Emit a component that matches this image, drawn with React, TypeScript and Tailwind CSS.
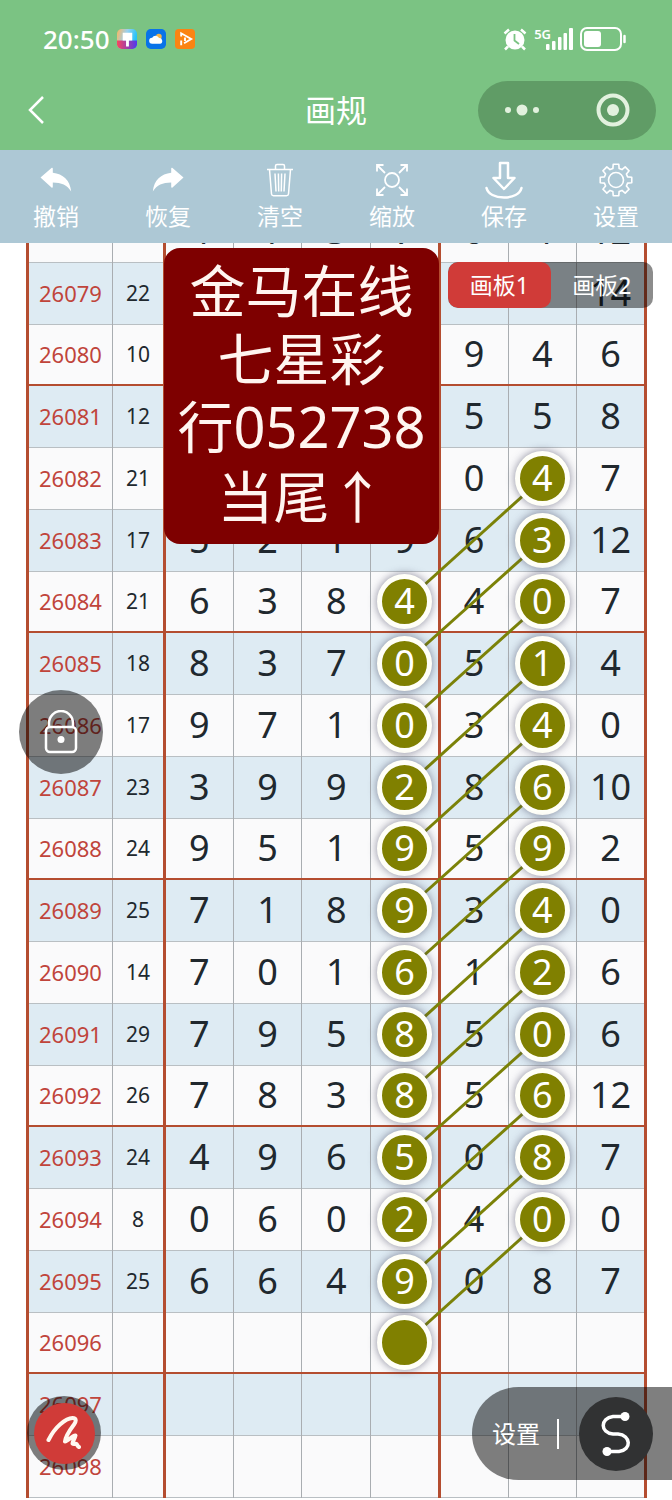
const rows = [
  { issue: "26078", sum: "", digits: ["4", "4", "3", "7", "0", "4", "12"] },
  { issue: "26079", sum: "22", digits: ["", "", "", "", "", "", "14"] },
  { issue: "26080", sum: "10", digits: ["", "", "", "", "9", "4", "6"] },
  { issue: "26081", sum: "12", digits: ["", "", "", "", "5", "5", "8"] },
  { issue: "26082", sum: "21", digits: ["", "", "", "", "0", "4", "7"] },
  { issue: "26083", sum: "17", digits: ["5", "2", "1", "9", "6", "3", "12"] },
  { issue: "26084", sum: "21", digits: ["6", "3", "8", "4", "4", "0", "7"] },
  { issue: "26085", sum: "18", digits: ["8", "3", "7", "0", "5", "1", "4"] },
  { issue: "26086", sum: "17", digits: ["9", "7", "1", "0", "3", "4", "0"] },
  { issue: "26087", sum: "23", digits: ["3", "9", "9", "2", "8", "6", "10"] },
  { issue: "26088", sum: "24", digits: ["9", "5", "1", "9", "5", "9", "2"] },
  { issue: "26089", sum: "25", digits: ["7", "1", "8", "9", "3", "4", "0"] },
  { issue: "26090", sum: "14", digits: ["7", "0", "1", "6", "1", "2", "6"] },
  { issue: "26091", sum: "29", digits: ["7", "9", "5", "8", "5", "0", "6"] },
  { issue: "26092", sum: "26", digits: ["7", "8", "3", "8", "5", "6", "12"] },
  { issue: "26093", sum: "24", digits: ["4", "9", "6", "5", "0", "8", "7"] },
  { issue: "26094", sum: "8", digits: ["0", "6", "0", "2", "4", "0", "0"] },
  { issue: "26095", sum: "25", digits: ["6", "6", "4", "9", "0", "8", "7"] },
  { issue: "26096", sum: "", digits: ["", "", "", "", "", "", ""] },
  { issue: "26097", sum: "", digits: ["", "", "", "", "", "", ""] },
  { issue: "26098", sum: "", digits: ["", "", "", "", "", "", ""] },
];

// every fourth issue closes a block with a red rule
const endsBlock = (issue: string) => Number(issue) % 4 === 0;

const rowCenter = (index: number) =>
  rows.slice(0, index).reduce((y, row) => y + (endsBlock(row.issue) ? 61 : 62), 0) + 31;

// each link goes from the sixth digit down to the fourth digit two rows later
const links = Array.from({ length: 13 }, (_, i) => ({ from: i + 4, to: i + 6 }));

const isMarked = (row: number, col: number) =>
  links.some((l) => (col === 5 && l.from === row) || (col === 3 && l.to === row));

const gearPoints = Array.from({ length: 8 }, (_, i) =>
  [
    [-15, 12],
    [-10, 16],
    [10, 16],
    [15, 12],
  ].map(([deg, r]) => {
    const a = ((i * 45 + deg) * Math.PI) / 180;
    return `${(17 + r * Math.sin(a)).toFixed(2)},${(17 - r * Math.cos(a)).toFixed(2)}`;
  })
)
  .flat()
  .join(" ");

function ArrowIcon({ flip = false }: { flip?: boolean }) {
  return (
    <svg viewBox="0 0 32 26" className={flip ? "h-[26px] w-8 -scale-x-100" : "h-[26px] w-8"} fill="currentColor">
      <path d="M.5 10.5 11.5 1c.7-.5 1.3-.2 1.3.6v4.2C23 7 30 13 31.2 24.5 27 18 21.5 15.7 12.8 15.6v4.2c0 .9-.7 1.2-1.3.6z" />
    </svg>
  );
}

function TrashIcon() {
  return (
    <svg viewBox="0 0 28 34" className="h-[34px] w-7" fill="none" stroke="currentColor" strokeWidth="1.5">
      <path d="M1 6.5h26M9.500 6.500V3q0-1.500 1.500-1.500h6q1.500 0 1.500 1.500v3.500M3.500 6.500l2 24.500q.2 1.800 2 1.800h13q1.800 0 2-1.800l2-24.500M9 10.500l1 18M12.400 10.500l.3 18M15.600 10.500l-.3 18M19 10.500l-1 18" />
    </svg>
  );
}

function ZoomIcon() {
  return (
    <svg viewBox="0 0 34 34" className="size-[34px]" fill="none" stroke="currentColor" strokeWidth="1.8">
      <circle cx="17" cy="17" r="7" />
      <path d="M8.500 2H2v6.500M2 2l8 8M25.500 2H32v6.500M32 2l-8 8M2 25.500V32h6.500M2 32l8-8M32 25.500V32h-6.500M32 32l-8-8" />
    </svg>
  );
}

function SaveIcon() {
  return (
    <svg
      viewBox="0 0 38 38"
      className="size-[38px]"
      fill="none"
      stroke="currentColor"
      strokeWidth="2.5"
      strokeLinejoin="round"
      strokeLinecap="round"
    >
      <path d="M15 2h8v15h6.500L19 28 8.500 17H15z" />
      <path d="M1.500 27C3 33 10 36.500 19 36.500S35 33 36.500 27" />
    </svg>
  );
}

function GearIcon() {
  return (
    <svg viewBox="0 0 34 34" className="size-[34px]" fill="none" stroke="currentColor" strokeWidth="1.6" strokeLinejoin="round">
      <polygon points={gearPoints} />
      <circle cx="17" cy="17" r="7.5" />
    </svg>
  );
}

const tools = [
  { label: "撤销", icon: <ArrowIcon /> },
  { label: "恢复", icon: <ArrowIcon flip /> },
  { label: "清空", icon: <TrashIcon /> },
  { label: "缩放", icon: <ZoomIcon /> },
  { label: "保存", icon: <SaveIcon /> },
  { label: "设置", icon: <GearIcon /> },
];

function StatusBar() {
  return (
    <div className="flex h-[70px] items-center justify-between pt-2 pr-[46px] pl-[43px]">
      <div className="flex items-center gap-[7px]">
        <span className="text-[26px] leading-none font-medium">20:50</span>
        <div className="flex items-center gap-[9px]">
          <svg viewBox="0 0 21 21" className="size-5">
            <defs>
              <linearGradient id="theme" x1="0" y1="0" x2="1" y2="0.3">
                <stop offset="0" stopColor="#ffb65c" />
                <stop offset="0.5" stopColor="#9bd0ee" />
                <stop offset="1" stopColor="#22c3fa" />
              </linearGradient>
              <linearGradient id="themeLow" x1="0" y1="0" x2="1" y2="0">
                <stop offset="0" stopColor="#f8475f" />
                <stop offset="1" stopColor="#5038ee" />
              </linearGradient>
            </defs>
            <rect width="21" height="21" rx="5" fill="url(#theme)" />
            <path d="M0 12h21v4a5 5 0 0 1-5 5H5a5 5 0 0 1-5-5z" fill="url(#themeLow)" />
            <path d="M6 4h10v8h-3.500v6.500h-3V12H6z" fill="#fff" />
          </svg>
          <svg viewBox="0 0 21 21" className="size-5">
            <rect width="21" height="21" rx="5" fill="#0873e8" />
            <circle cx="13.5" cy="8" r="3" fill="#f6b64b" />
            <path d="M6.500 15.500a3.200 3.200 0 0 1 0-6.400 4 4 0 0 1 7.200.3 3.100 3.100 0 0 1 1 6.100z" fill="#fff" />
          </svg>
          <svg viewBox="0 0 21 21" className="size-5">
            <rect width="21" height="21" rx="4" fill="#fb8412" />
            <path d="M6.500 8V4.500l10.500 6-7.500 4.500M6.500 12v5M10.500 9v3.500" fill="none" stroke="#fff" strokeWidth="2" />
          </svg>
        </div>
      </div>
      <div className="flex items-center gap-[7px]">
        <svg viewBox="0 0 24 24" className="size-6">
          <circle cx="12" cy="13" r="9.5" fill="#fff" />
          <path d="M1.500 6.500 6 2.500M22.500 6.500 18 2.500M5 19.500l-3 3M19 19.500l3 3" stroke="#fff" strokeWidth="2.5" />
          <path d="M11.500 7v6.500l4.500 3.500" fill="none" stroke="#7bc383" strokeWidth="1.8" />
        </svg>
        <div className="flex items-end">
          <span className="-mr-[10px] self-start text-[13px] leading-3 font-semibold">5G</span>
          <svg viewBox="0 0 32 22" className="h-[22px] w-8" fill="#fff">
            <rect x="5" y="16" width="3.5" height="6" rx="1" />
            <rect x="11" y="13" width="3.5" height="9" rx="1" />
            <rect x="17" y="9" width="3.5" height="13" rx="1" />
            <rect x="22.500" y="5" width="3.500" height="17" rx="1" />
            <rect x="28" y="0" width="4" height="22" rx="1" />
          </svg>
        </div>
        <svg viewBox="0 0 46 24" className="h-6 w-[46px]" fill="none">
          <rect x="1" y="1" width="40" height="22" rx="6" stroke="#fff" strokeWidth="2" />
          <rect x="4" y="4" width="17" height="16" rx="3" fill="#fff" />
          <path d="M44.500 9v6" stroke="#fff" strokeWidth="2.5" strokeLinecap="round" />
        </svg>
      </div>
    </div>
  );
}

export default function App() {
  return (
    <div className="flex h-screen flex-col overflow-hidden bg-white font-['Noto_Sans','Noto_Sans_CJK_SC',sans-serif]">
      <header className="bg-[#7bc383] text-white">
        <StatusBar />
        <nav className="grid h-20 grid-cols-3 items-center px-4">
          <button aria-label="返回" className="ml-2 flex size-6 items-center justify-center">
            <svg viewBox="0 0 16 28" className="h-7 w-4" fill="none" stroke="currentColor" strokeWidth="2.5">
              <path d="M15 1 2 14l13 13" />
            </svg>
          </button>
          <h1 className="text-center text-[31px] leading-none">画规</h1>
          <div className="flex h-[59px] w-[178px] items-center justify-between justify-self-end rounded-full bg-[#609c66] px-[26px]">
            <button aria-label="更多">
              <svg viewBox="0 0 36 12" className="h-3 w-9" fill="#e2f1de">
                <circle cx="4" cy="6" r="3" />
                <circle cx="18" cy="6" r="5.5" />
                <circle cx="32" cy="6" r="3" />
              </svg>
            </button>
            <button aria-label="关闭">
              <svg viewBox="0 0 34 34" className="size-[34px]">
                <circle cx="17" cy="17" r="14.5" fill="none" stroke="#e2f1de" strokeWidth="4" />
                <circle cx="17" cy="17" r="6" fill="#e2f1de" />
              </svg>
            </button>
          </div>
        </nav>
      </header>

      <div className="grid h-[93px] shrink-0 grid-cols-6 bg-[#adc8d5] text-white">
        {tools.map((tool) => (
          <button key={tool.label} className="flex flex-col items-center pt-[10px]">
            <span className="flex h-10 items-center justify-center">{tool.icon}</span>
            <span className="text-[23px] leading-8">{tool.label}</span>
          </button>
        ))}
      </div>

      <main className="relative flex-1 overflow-hidden">
        <div className="relative mr-[25px] ml-[26px] -mt-[43px]">
          <table className="w-full table-fixed border-collapse border-x-3 border-[#b44d30] text-center text-[#20282e]">
            <colgroup>
              <col className="w-[85px]" />
              <col className="w-[52px]" />
              <col span={7} />
            </colgroup>
            <tbody>
              {rows.map((row, r) => (
                <tr
                  key={row.issue}
                  className={`${r % 2 ? "bg-[#deebf3]" : "bg-[#fafafb]"} ${
                    endsBlock(row.issue) ? "h-[61px] border-b-2 border-b-[#b44d30]" : "h-[62px] border-b border-b-[#b9bfc3]"
                  }`}
                >
                  <th scope="row" className="border-r border-r-[#a9adb1] p-0 text-[22px] leading-none font-normal text-[#c0443b]">
                    {row.issue}
                  </th>
                  <td className="border-r-3 border-r-[#b44d30] p-0 text-[21px] leading-none">{row.sum}</td>
                  {row.digits.map((digit, c) => (
                    <td
                      key={c}
                      className={`p-0 text-4xl leading-none ${
                        c === 3 || c === 6 ? "border-r-3 border-r-[#b44d30]" : "border-r border-r-[#a9adb1]"
                      }`}
                    >
                      {isMarked(r, c) ? (
                        <span className="relative z-10 mx-auto flex size-[55px] items-center justify-center rounded-full border-5 border-[#fffff8] bg-[#808000] text-white shadow-[0_0_8px_rgba(60,60,90,0.6)]">
                          {digit}
                        </span>
                      ) : (
                        digit
                      )}
                    </td>
                  ))}
                </tr>
              ))}
            </tbody>
          </table>
          <svg className="pointer-events-none absolute inset-0 size-full" stroke="#7b8208" strokeWidth="3">
            {links.map((l) => (
              <line key={l.from} x1="83.2%" y1={rowCenter(l.from)} x2="61.1%" y2={rowCenter(l.to)} />
            ))}
          </svg>
        </div>

        <div className="absolute top-[5px] left-[164px] z-20 w-[275px] rounded-2xl bg-[#7e0000] pt-2 pb-[14px] text-center text-[56px] leading-[68px] text-[#fff5f0]">
          <p>金马在线</p>
          <p>七星彩</p>
          <p>行052738</p>
          <p>当尾<span className="font-['Noto_Sans_CJK_SC',sans-serif]">↑</span></p>
        </div>

        <div className="absolute top-[19px] right-[19px] z-20 grid h-[46px] w-[205px] grid-cols-2 overflow-hidden rounded-[10px] bg-black/45 text-[23px] text-white">
          <button className="rounded-[10px] bg-[#d03b38]">画板1</button>
          <button>画板2</button>
        </div>

        <button
          aria-label="锁定"
          className="absolute top-[447px] left-[19px] z-20 flex size-[84px] items-center justify-center rounded-full bg-black/50"
        >
          <svg viewBox="0 0 34 44" className="h-11 w-[34px]" fill="none" stroke="#fff" strokeWidth="2.5">
            <rect x="2" y="17" width="30" height="25" rx="4" />
            <path d="M5 17v-4a12 12 0 0 1 24 0v4" />
            <circle cx="17" cy="29.5" r="3.5" fill="#fff" stroke="none" />
          </svg>
        </button>

        <button
          aria-label="画笔"
          className="absolute bottom-[30px] left-[27px] z-20 flex size-[74px] items-center justify-center rounded-full bg-black/50"
        >
          <span className="flex size-[61px] items-center justify-center rounded-full bg-[#d03b38]">
            <svg
              viewBox="0 0 36 36"
              className="size-9"
              fill="none"
              stroke="#fff8f0"
              strokeWidth="4"
              strokeLinecap="round"
              strokeLinejoin="round"
            >
              <path d="M2.500 25C6 18 10 13 14 9.500 19 5 23 3 26.500 3c4 0 4 3 1.500 6.500-3 4-8.500 11.500-9 17 3 0 6.500-5.500 10.500-6-.5 3-3 5.500-3 8 1.500 1.500 3-.5 4 .5s1 2.500 2.500 3" />
            </svg>
          </span>
        </button>

        <div className="absolute right-0 bottom-5 z-20 flex h-[93px] items-center rounded-l-full bg-black/50 pr-[19px] pl-5 text-white">
          <button className="text-2xl">设置</button>
          <span className="mr-5 ml-[17px] h-[30px] w-[2px] bg-white" />
          <button aria-label="曲线" className="flex size-[74px] items-center justify-center rounded-full bg-[#313233]">
            <svg viewBox="0 0 30 46" className="h-[46px] w-[30px]" fill="none" stroke="#fff" strokeWidth="3.5">
              <path d="M24 5.500H12C-1 7-1 22 12 23h5c13 1 14 16 1 17.500H6" />
              <circle cx="24" cy="5.5" r="4.5" fill="#fff" stroke="none" />
              <circle cx="6" cy="40.5" r="4.5" fill="#fff" stroke="none" />
            </svg>
          </button>
        </div>
      </main>
    </div>
  );
}
